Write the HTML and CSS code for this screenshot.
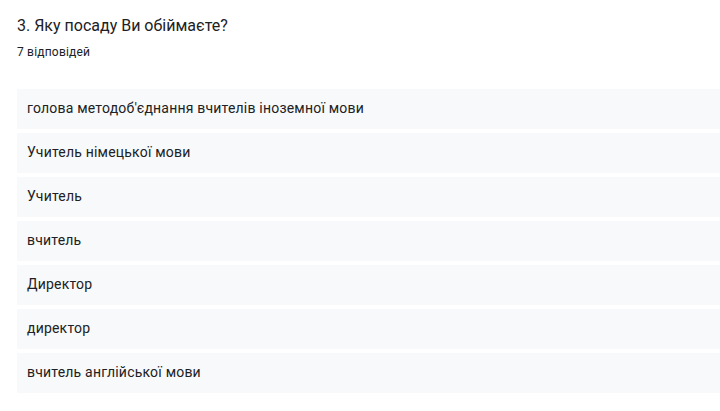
FILE: index.html
```html
<!DOCTYPE html>
<html lang="uk">
<head>
<meta charset="utf-8">
<link rel="stylesheet" href="styles.css">
</head>
<body>
<div class="card">
  <div class="title">3. Яку посаду Ви обіймаєте?</div>
  <div class="count">7 відповідей</div>
  <div class="list">
    <div class="row">голова методоб'єднання вчителів іноземної мови</div>
    <div class="row">Учитель німецької мови</div>
    <div class="row">Учитель</div>
    <div class="row">вчитель</div>
    <div class="row">Директор</div>
    <div class="row">директор</div>
    <div class="row">вчитель англійської мови</div>
  </div>
</div>
</body>
</html>
```

FILE: styles.css
```css
html, body {
  margin: 0;
  padding: 0;
  background: #ffffff;
}
body {
  font-family: Roboto, "Liberation Sans", sans-serif;
  color: #202124;
}
.card {
  padding: 14px 0 0 17px;
}
.title {
  font-size: 16px;
  line-height: 24px;
  color: #202124;
}
.count {
  margin-top: 6px;
  font-size: 12px;
  line-height: 16px;
  letter-spacing: 0.2px;
  color: #202124;
}
.list {
  margin-top: 29px;
  display: flex;
  flex-direction: column;
  gap: 4px;
}
.row {
  height: 40px;
  box-sizing: border-box;
  display: flex;
  align-items: center;
  padding: 0 0 2px 10px;
  background: #f8f9fa;
  font-size: 14px;
  letter-spacing: 0.2px;
  color: #202124;
}
```
